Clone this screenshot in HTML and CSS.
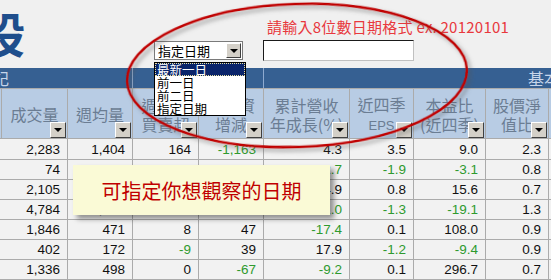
FILE: index.html
```html
<!DOCTYPE html>
<html lang="zh-Hant">
<head>
<meta charset="utf-8">
<link rel="stylesheet" href="styles.css">
</head>
<body>
<div class="page">
  <header class="top">
    <div class="title-wrap"><span class="title">股</span></div>
    <div class="form">
      <div class="hint">請輸入8位數日期格式 ex. 20120101</div>
      <div class="form-row">
        <div class="select"><span class="select-text">指定日期</span><span class="select-btn"><i class="tri"></i></span></div>
        <div class="input"></div>
      </div>
    </div>
  </header>
  <div class="bar">
    <div class="bar-seg seg1"><span class="bar-text cut">記</span></div>
    <div class="bar-seg seg2"></div>
    <div class="bar-seg seg3"><span class="bar-text right">基本面</span></div>
  </div>
  <div class="grid">
    <div class="hc"></div>
    <div class="hc"><span class="hl">成交量</span><span class="fbtn"><i class="tri"></i></span></div>
    <div class="hc"><span class="hl">週均量</span><span class="fbtn"><i class="tri"></i></span></div>
    <div class="hc"><span class="hl">週外資<br>買賣超</span><span class="fbtn"><i class="tri"></i></span></div>
    <div class="hc"><span class="hl">週融資<br>增減</span><span class="fbtn"><i class="tri"></i></span></div>
    <div class="hc"><span class="hl">累計營收<br>年成長(%)</span><span class="fbtn"><i class="tri"></i></span></div>
    <div class="hc"><span class="hl">近四季<br><span class="lat">EPS</span></span><span class="fbtn"><i class="tri"></i></span></div>
    <div class="hc"><span class="hl">本益比<br>(近四季)</span><span class="fbtn"><i class="tri"></i></span></div>
    <div class="hc"><span class="hl">股價淨<br>值比</span><span class="fbtn"><i class="tri"></i></span></div>
    <div class="hc"></div>

    <div class="dc"></div><div class="dc">2,283</div><div class="dc">1,404</div><div class="dc">164</div><div class="dc g">-1,163</div><div class="dc">4.3</div><div class="dc">3.5</div><div class="dc">9.0</div><div class="dc">2.3</div><div class="dc"></div>
    <div class="dc"></div><div class="dc">74</div><div class="dc">186</div><div class="dc">12</div><div class="dc">35</div><div class="dc g">-12.7</div><div class="dc g">-1.9</div><div class="dc g">-3.1</div><div class="dc">0.8</div><div class="dc"></div>
    <div class="dc"></div><div class="dc">2,105</div><div class="dc">562</div><div class="dc g">-25</div><div class="dc">118</div><div class="dc">24.9</div><div class="dc">0.8</div><div class="dc">15.6</div><div class="dc">0.7</div><div class="dc"></div>
    <div class="dc"></div><div class="dc">4,784</div><div class="dc">1,203</div><div class="dc">31</div><div class="dc g">-96</div><div class="dc g">-31.0</div><div class="dc g">-1.3</div><div class="dc g">-19.1</div><div class="dc">1.3</div><div class="dc"></div>
    <div class="dc"></div><div class="dc">1,846</div><div class="dc">471</div><div class="dc">8</div><div class="dc">47</div><div class="dc g">-17.4</div><div class="dc">0.1</div><div class="dc">108.0</div><div class="dc">0.9</div><div class="dc"></div>
    <div class="dc"></div><div class="dc">402</div><div class="dc">172</div><div class="dc g">-9</div><div class="dc">39</div><div class="dc">17.9</div><div class="dc g">-1.2</div><div class="dc g">-9.4</div><div class="dc">0.9</div><div class="dc"></div>
    <div class="dc"></div><div class="dc">1,336</div><div class="dc">498</div><div class="dc">0</div><div class="dc g">-67</div><div class="dc g">-9.2</div><div class="dc">0.1</div><div class="dc">296.7</div><div class="dc">0.7</div><div class="dc"></div>
  </div>

  <div class="dropdown">
    <div class="dd-item active">最新一日</div>
    <div class="dd-item">前一日</div>
    <div class="dd-item">前二日</div>
    <div class="dd-item">指定日期</div>
  </div>

  <div class="callout">可指定你想觀察的日期</div>

  <svg class="ring" width="551" height="280" viewBox="0 0 551 280">
    <defs>
      <filter id="sh" x="-10%" y="-10%" width="120%" height="130%">
        <feDropShadow dx="3" dy="3" stdDeviation="2" flood-color="#555" flood-opacity="0.55"/>
      </filter>
    </defs>
    <ellipse cx="297" cy="75.5" rx="170" ry="71.5" transform="rotate(-2 297 75.5)" fill="none" stroke="#c00000" stroke-width="2.5" filter="url(#sh)"/>
  </svg>
</div>
</body>
</html>
```

FILE: styles.css
```css
* { box-sizing: border-box; margin: 0; padding: 0; }

body {
  width: 551px;
  height: 280px;
  overflow: hidden;
  background: #f0f0f0;
  font-family: "Noto Sans CJK TC", "Noto Sans", sans-serif;
}

.page {
  position: relative;
  width: 551px;
  height: 280px;
  overflow: hidden;
}

.top {
  height: 68px;
  display: flex;
}

.title-wrap {
  width: 154px;
  flex: none;
  overflow: hidden;
}

.title {
  display: block;
  margin-left: -23px;
  margin-top: 1px;
  font-size: 48px;
  line-height: 62px;
  font-weight: 700;
  color: #1f4e8c;
}

.form {
  display: flex;
  flex-direction: column;
}

.hint {
  margin-left: 113px;
  margin-top: 17px;
  font-size: 15px;
  line-height: 20px;
  letter-spacing: 0.25px;
  color: #e8383d;
  white-space: nowrap;
}

.form-row {
  display: flex;
  align-items: center;
  gap: 20px;
  margin-top: 3px;
}

.select {
  width: 89px;
  height: 19px;
  background: #fff;
  border: 1px solid #7a7a7a;
  display: flex;
  align-items: center;
  justify-content: space-between;
  padding: 1px;
}

.select-text {
  font-size: 13px;
  line-height: 15px;
  padding-left: 2px;
  color: #000;
}

.select-btn {
  width: 15px;
  height: 15px;
  background: #d4d0c8;
  border: 1px solid;
  border-color: #fff #404040 #404040 #fff;
  display: flex;
  align-items: center;
  justify-content: center;
}

.tri {
  display: block;
  width: 0;
  height: 0;
  border-left: 4px solid transparent;
  border-right: 4px solid transparent;
  border-top: 4px solid #000;
}

.input {
  width: 151px;
  height: 21px;
  background: #fff;
  border: 1px solid;
  border-color: #1a1a1a #c0c0c0 #c0c0c0 #1a1a1a;
}

.bar {
  height: 20px;
  background: #8eaad0;
  display: flex;
  gap: 1px;
}

.bar-seg {
  background: #366092;
  overflow: hidden;
  display: flex;
  align-items: center;
}

.seg1 { width: 132px; }
.seg2 { width: 130px; }
.seg3 { flex: 1; }

.bar-text {
  color: #c6d5ea;
  font-size: 16px;
  line-height: 20px;
  white-space: nowrap;
}

.cut { margin-left: -7px; }
.right { margin-left: 264px; }

.grid {
  display: grid;
  grid-template-columns: 1px 65px 64px 65px 64px 85px 63px 71px 62px 1fr;
  grid-template-rows: 49px 20px repeat(6, 19px);
  gap: 1px;
  background: #ababab;
  padding: 1px 0;
}

.hc {
  position: relative;
  background: #b8cce4;
  display: flex;
  align-items: center;
  justify-content: center;
  color: #6b7d93;
  font-size: 16px;
  line-height: 19px;
  padding-top: 2px;
  overflow: hidden;
}

.hl {
  display: block;
  text-align: center;
  white-space: nowrap;
}

.lat {
  font-family: "Liberation Sans", Arial, sans-serif;
  font-size: 13px;
}

.fbtn {
  position: absolute;
  right: 1px;
  bottom: 0;
  width: 16px;
  height: 16px;
  background: #d4d0c8;
  border: 1px solid;
  border-color: #fff #404040 #404040 #fff;
  display: flex;
  align-items: center;
  justify-content: center;
}

.dc {
  background: #f2f2f2;
  display: flex;
  align-items: center;
  justify-content: flex-end;
  padding-right: 7px;
  font-family: "Liberation Sans", Arial, sans-serif;
  font-size: 13.5px;
  color: #111;
  white-space: nowrap;
}

.g { color: #2e9a2e; }

.dropdown {
  position: absolute;
  left: 154px;
  top: 62px;
  width: 92px;
  height: 54px;
  background: #fff;
  border: 1px solid #000;
  font-size: 12.5px;
  line-height: 13px;
  color: #000;
}

.dd-item {
  height: 13px;
  padding-left: 2px;
  white-space: nowrap;
}

.dd-item.active {
  background: #0a246a;
  color: #fff;
  outline: 1px dotted #e8e0a0;
  outline-offset: -1px;
}

.callout {
  position: absolute;
  left: 73px;
  top: 165px;
  width: 257px;
  height: 50px;
  background: #fafad6;
  box-shadow: 4px 4px 5px rgba(0, 0, 0, 0.4);
  display: flex;
  align-items: center;
  justify-content: center;
  color: #c00000;
  font-size: 20px;
}

.ring {
  position: absolute;
  left: 0;
  top: 0;
  pointer-events: none;
}
```
